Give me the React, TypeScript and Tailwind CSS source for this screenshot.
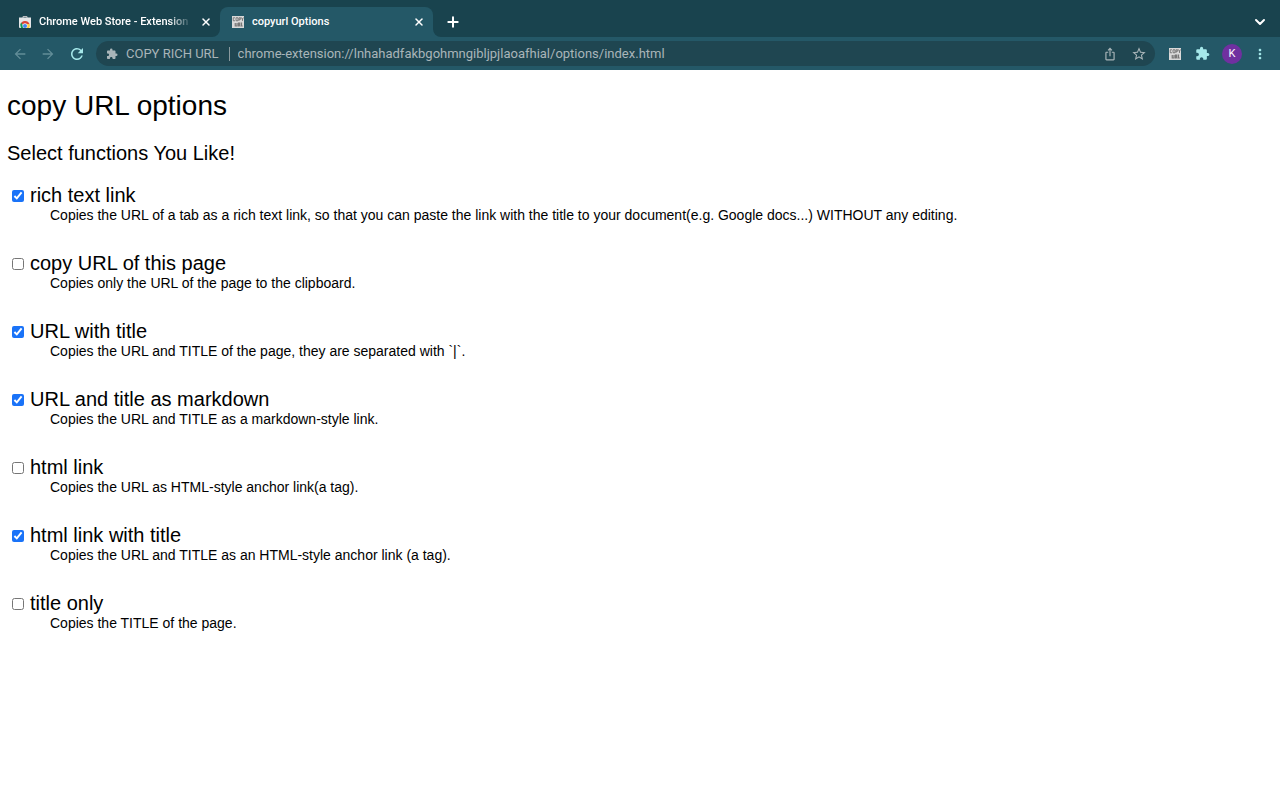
import React, { useState } from 'react'
import { ChevronDown, Plus, X } from 'lucide-react'
import {
  MdArrowBack,
  MdArrowForward,
  MdExtension,
  MdIosShare,
  MdMoreVert,
  MdRefresh,
  MdStarBorder,
} from 'react-icons/md'

interface OptionProps {
  id: string
  title: string
  description: string
  enabled: boolean
}

const options: OptionProps[] = [
  {
    id: 'rich',
    title: 'rich text link',
    description:
      'Copies the URL of a tab as a rich text link, so that you can paste the link with the title to your document(e.g. Google docs...) WITHOUT any editing.',
    enabled: true,
  },
  {
    id: 'url',
    title: 'copy URL of this page',
    description: 'Copies only the URL of the page to the clipboard.',
    enabled: false,
  },
  {
    id: 'url-title',
    title: 'URL with title',
    description: 'Copies the URL and TITLE of the page, they are separated with `|`.',
    enabled: true,
  },
  {
    id: 'markdown',
    title: 'URL and title as markdown',
    description: 'Copies the URL and TITLE as a markdown-style link.',
    enabled: true,
  },
  {
    id: 'html',
    title: 'html link',
    description: 'Copies the URL as HTML-style anchor link(a tag).',
    enabled: false,
  },
  {
    id: 'html-title',
    title: 'html link with title',
    description: 'Copies the URL and TITLE as an HTML-style anchor link (a tag).',
    enabled: true,
  },
  {
    id: 'title',
    title: 'title only',
    description: 'Copies the TITLE of the page.',
    enabled: false,
  },
]

const CopyIcon: React.FunctionComponent = () => (
  <svg className="size-3 shrink-0" viewBox="0 0 24 24" aria-hidden="true">
    <path fill="#d9d9d9" d="M0 0h24v24H0z" />
    <path
      fill="none"
      stroke="#5d5d5d"
      strokeWidth="1.4"
      d="M6 3.5H2.5v6H6M8 3.5h4v6H8zM14 10V3.5h3.5v3H14M19 3l2 3.500L23 3M21 6v4"
    />
    <path fill="none" stroke="#777" strokeWidth="2.4" d="M6.500 14v6h3.500v-6M13 21v-7h2.500v3h-1l2 4M19 13v7h2.500" />
  </svg>
)

const StoreIcon: React.FunctionComponent = () => (
  <svg className="size-3 shrink-0" viewBox="0 0 24 24" aria-hidden="true">
    <path fill="none" stroke="#b9bcc0" strokeWidth="2" d="M8 5V1h8v4" />
    <path fill="#e4e5e7" d="M0 3h24v19q0 2-2 2H2q-2 0-2-2z" />
    <path fill="#db4437" d="M3 17a9.500 9.500 0 0 1 18-1h-9z" />
    <path fill="#0f9d58" d="M2.500 18a9.500 9.500 0 0 1 2-5l6 11H4z" />
    <path fill="#ffcd40" d="M13 16h8.500q1 4-1.500 8h-8z" />
    <circle cx="12" cy="19.500" r="5" fill="#f1f1f1" />
    <circle cx="12" cy="20" r="4" fill="#4285f4" />
  </svg>
)

const Option: React.FunctionComponent<OptionProps> = ({ id, title, description, enabled }) => {
  const [isChecked, setIsChecked] = useState(enabled)

  return (
    <li>
      <div className="flex items-center gap-1.5 pl-[5px]">
        <input
          id={id}
          type="checkbox"
          className="mt-0.5 size-3 accent-[#1a73f8]"
          checked={isChecked}
          onChange={() => setIsChecked(!isChecked)}
        />
        <label htmlFor={id} className="text-xl leading-6">
          {title}
        </label>
      </div>
      <p className="pl-[43px] text-sm leading-4">{description}</p>
    </li>
  )
}

const App: React.FunctionComponent = () => {
  return (
    <div className="min-h-screen bg-white">
      <header className="bg-[#245867] font-[Roboto,sans-serif] text-white">
        <div className="flex h-[37px] bg-[#19434e] pt-[7px]">
          <div className="flex w-[220px] items-center gap-2 pl-[19px] pr-2">
            <StoreIcon />
            <span className="min-w-0 flex-1 whitespace-nowrap mask-r-from-85% text-[11px] font-medium">
              Chrome Web Store - Extension
            </span>
            <button aria-label="Close Chrome Web Store">
              <X className="size-3" strokeWidth={3} />
            </button>
          </div>
          <div className="relative flex w-[213px] items-center gap-2 rounded-t-lg bg-[#245867] pl-3 pr-2">
            <svg className="absolute -left-2 bottom-0 size-2" viewBox="0 0 8 8" aria-hidden="true">
              <path fill="#245867" d="M8 0v8H0a8 8 0 0 0 8-8" />
            </svg>
            <svg className="absolute -right-2 bottom-0 size-2" viewBox="0 0 8 8" aria-hidden="true">
              <path fill="#245867" d="M0 0v8h8a8 8 0 0 1-8-8" />
            </svg>
            <CopyIcon />
            <span className="flex-1 text-[11px] font-medium">copyurl Options</span>
            <button aria-label="Close copyurl Options">
              <X className="size-3" strokeWidth={3} />
            </button>
          </div>
          <button className="ml-3" aria-label="New tab">
            <Plus className="size-4" strokeWidth={3} />
          </button>
          <button className="ml-auto mr-3" aria-label="Search tabs">
            <ChevronDown className="size-4" strokeWidth={3} />
          </button>
        </div>
        <div className="flex h-[33px] items-center px-3">
          <button className="text-[#628d98]" aria-label="Back">
            <MdArrowBack className="size-4" />
          </button>
          <button className="ml-3 text-[#628d98]" aria-label="Forward">
            <MdArrowForward className="size-4" />
          </button>
          <button className="ml-3 text-[#a5e8ea]" aria-label="Reload">
            <MdRefresh className="size-[18px]" />
          </button>
          <div className="ml-2.5 flex h-[25px] min-w-0 flex-1 items-center rounded-full bg-[#1f4651] pl-2.5 pr-2 text-[13px] text-[#a9b5b9]">
            <MdExtension className="size-3 shrink-0" />
            <span className="ml-2 whitespace-nowrap">COPY RICH URL</span>
            <span className="ml-2.5 mr-2 h-3.5 w-px bg-[#8a9a9f]" />
            <input
              className="min-w-0 flex-1 bg-transparent outline-none"
              type="text"
              aria-label="Address"
              defaultValue="chrome-extension://lnhahadfakbgohmngibljpjlaoafhial/options/index.html"
            />
            <button aria-label="Share">
              <MdIosShare className="size-3.5" />
            </button>
            <button className="ml-3.5" aria-label="Bookmark">
              <MdStarBorder className="size-4" />
            </button>
          </div>
          <button className="ml-3.5" aria-label="Copy rich URL">
            <CopyIcon />
          </button>
          <button className="ml-3.5 text-[#a5e8ea]" aria-label="Extensions">
            <MdExtension className="size-[15px]" />
          </button>
          <button
            className="ml-3 size-5 rounded-full bg-[#7030a0] text-[11px] leading-5"
            aria-label="Profile K"
          >
            K
          </button>
          <button className="ml-2.5 text-[#a5e8ea]" aria-label="Menu">
            <MdMoreVert className="size-4" />
          </button>
        </div>
      </header>
      <main className="px-[7px] pt-5 font-['Liberation_Sans',Arial,sans-serif] text-black">
        <h1 className="text-[28px] leading-8">copy URL options</h1>
        <h2 className="mt-[19px] text-xl leading-6">Select functions You Like!</h2>
        <ul className="mt-[18px] flex flex-col gap-7">
          {options.map((option) => (
            <Option key={option.id} {...option} />
          ))}
        </ul>
      </main>
    </div>
  )
}

export default App
